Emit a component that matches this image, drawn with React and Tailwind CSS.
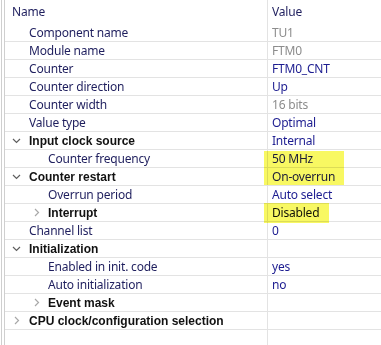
import React from 'react'

const ROWS = [
  { name: 'Component name', value: 'TU1', indent: 1, muted: true },
  { name: 'Module name', value: 'FTM0', indent: 1, muted: true },
  { name: 'Counter', value: 'FTM0_CNT', indent: 1 },
  { name: 'Counter direction', value: 'Up', indent: 1 },
  { name: 'Counter width', value: '16 bits', indent: 1, muted: true },
  { name: 'Value type', value: 'Optimal', indent: 1 },
  { name: 'Input clock source', value: 'Internal', indent: 1, group: 'open' },
  { name: 'Counter frequency', value: '50 MHz', indent: 2 },
  { name: 'Counter restart', value: 'On-overrun', indent: 1, group: 'open' },
  { name: 'Overrun period', value: 'Auto select', indent: 2 },
  { name: 'Interrupt', value: 'Disabled', indent: 2, group: 'closed', dark: true },
  { name: 'Channel list', value: '0', indent: 1 },
  { name: 'Initialization', value: '', indent: 1, group: 'open' },
  { name: 'Enabled in init. code', value: 'yes', indent: 2 },
  { name: 'Auto initialization', value: 'no', indent: 2 },
  { name: 'Event mask', value: '', indent: 2, group: 'closed' },
  { name: 'CPU clock/configuration selection', value: '', indent: 1, group: 'closed' },
]

function ChevronDown() {
  return (
    <svg width="9" height="6" viewBox="0 0 9 6" className="shrink-0">
      <path d="M1 1 L4.5 4.5 L8 1" fill="none" stroke="#5f5f5f" strokeWidth="1.2" />
    </svg>
  )
}

function ChevronRight() {
  return (
    <svg width="6" height="9" viewBox="0 0 6 9" className="shrink-0">
      <path d="M1 1 L4.5 4.5 L1 8" fill="none" stroke="#a8a8a8" strokeWidth="1.2" />
    </svg>
  )
}

function Row({ row }) {
  const textLeft = row.indent === 1 ? 'pl-[24px]' : 'pl-[43px]'
  const chevLeft = row.indent === 1 ? 'left-[7px]' : 'left-[27px]'
  return (
    <div className="flex h-[18px] border-b border-[#e3e3e3]">
      <div className="relative flex items-center w-[263px] shrink-0 border-r border-[#e3e3e3] overflow-hidden whitespace-nowrap">
        {row.group && (
          <span className={`absolute top-0 bottom-0 flex items-center w-[9px] justify-center ${chevLeft}`}>
            {row.group === 'open' ? <ChevronDown /> : <ChevronRight />}
          </span>
        )}
        <span
          className={`${textLeft} ${
            row.group
              ? "font-bold text-[#111] font-['Liberation_Sans',sans-serif]"
              : 'text-[#1f1f5e] tracking-[-0.2px]'
          }`}
        >
          {row.name}
        </span>
      </div>
      <div
        className={`flex items-center pl-[4px] whitespace-nowrap tracking-[-0.2px] ${
          row.muted ? 'text-[#8c8c8c]' : row.dark ? 'text-[#111]' : 'text-[#1c1c90]'
        }`}
      >
        {row.value}
      </div>
    </div>
  )
}

export default function App() {
  return (
    <div className="relative w-[381px] h-[345px] bg-white overflow-hidden text-[12px] font-['Noto_Sans',sans-serif]">
      <div className="flex h-full">
        <div className="w-px shrink-0" />
        <div className="w-px shrink-0 bg-[#cfcfcf]" />
        <div className="w-[2px] shrink-0" />
        <div className="w-px shrink-0 bg-[#cfcfcf]" />
        <div className="flex-1 flex flex-col">
          <div className="flex h-[24px] text-[#1f1f5e] tracking-[-0.2px]">
            <div className="flex items-center w-[263px] shrink-0 border-r border-[#e3e3e3] pl-[7px]">Name</div>
            <div className="flex items-center pl-[4px]">Value</div>
          </div>
          {ROWS.map((r) => (
            <Row key={r.name} row={r} />
          ))}
          <div className="flex-1 flex">
            <div className="w-[263px] shrink-0 border-r border-[#e3e3e3]" />
          </div>
        </div>
      </div>
      {/* marker highlights drawn on top of the values */}
      <div className="absolute left-[264px] top-[151px] w-[80px] h-[34px] bg-[#f8f862] mix-blend-multiply" />
      <div className="absolute left-[264px] top-[203px] w-[65px] h-[20px] bg-[#f8f862] mix-blend-multiply" />
    </div>
  )
}
